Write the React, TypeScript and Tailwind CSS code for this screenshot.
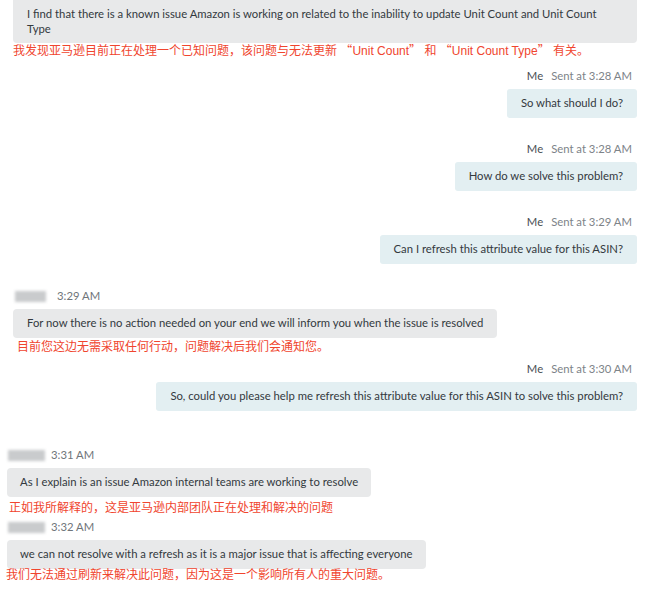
const font = { fontFamily: 'Lato, "Noto Sans CJK SC", sans-serif' };
const redFont = { fontFamily: '"Liberation Sans", "Noto Sans CJK SC", sans-serif' };
const quote = { fontFamily: '"Noto Sans CJK SC", sans-serif' };

type MineProps = { time: string; text: string; className?: string };

const Mine: React.FC<MineProps> = ({ time, text, className }) => (
  <div className={`flex flex-col items-end pr-[23px] ${className ?? ''}`}>
    <div className="flex items-center gap-[8px] pr-[5px] text-[11.3px] leading-[14px]">
      <span className="text-[#4a4f54]">Me</span>
      <span className="text-[#7d8388]">Sent at {time}</span>
    </div>
    <div className="mt-[6px] rounded-[3px] bg-[#e3eff2] px-[14px] h-[29px] flex items-center text-[11.3px] text-[#33393e]">
      {text}
    </div>
  </div>
);

type TheirsProps = {
  time: string;
  text: string;
  zh: string;
  wide?: boolean;
  zhClass: string;
  className?: string;
};

const Theirs: React.FC<TheirsProps> = ({ time, text, zh, wide, zhClass, className }) => (
  <div className={`flex flex-col items-start ${className ?? ''}`}>
    <div className={`flex items-center h-[14px] ${wide ? 'pl-[15px]' : 'pl-[8px]'}`}>
      <div
        className={`h-[11px] bg-[#c9cbcd] blur-[1.5px] ${wide ? 'w-[31px] mr-[11px]' : 'w-[37px] mr-[6px]'}`}
      />
      <span className="text-[11.3px] text-[#6f757a]">{time}</span>
    </div>
    <div
      className={`mt-[6px] rounded-[4px] bg-[#e8e9ea] h-[29px] flex items-center text-[11.3px] text-[#33393e] ${wide ? 'ml-[13px] px-[14px]' : 'ml-[7px] px-[13px]'}`}
    >
      {text}
    </div>
    <div className={`text-[12px] leading-[14px] text-[#f0452e] ${zhClass}`} style={redFont}>
      {zh}
    </div>
  </div>
);

export default function App() {
  return (
    <div className="w-[660px] h-[590px] overflow-hidden bg-white" style={font}>
      <div className="ml-[13px] mr-[23px] -mt-[4px] rounded-[4px] bg-[#e8e9ea] pl-[14px] pr-[20px] pt-[10px] pb-[7px] text-[11.3px] leading-[15px] text-[#33393e]">
        I find that there is a known issue Amazon is working on related to the
        inability to update Unit Count and Unit Count Type
      </div>
      <div className="ml-[13px] text-[12px] leading-[14px] text-[#f0452e]" style={redFont}>
        我发现亚马逊目前正在处理一个已知问题，该问题与无法更新{' '}
        <span style={quote}>“</span>Unit Count<span style={quote}>”</span> 和{' '}
        <span style={quote}>“</span>Unit Count Type<span style={quote}>”</span> 有关。
      </div>

      <Mine className="mt-[11px]" time="3:28 AM" text="So what should I do?" />
      <Mine className="mt-[24px]" time="3:28 AM" text="How do we solve this problem?" />
      <Mine
        className="mt-[24px]"
        time="3:29 AM"
        text="Can I refresh this attribute value for this ASIN?"
      />

      <Theirs
        className="mt-[25px]"
        wide
        time="3:29 AM"
        text="For now there is no action needed on your end we will inform you when the issue is resolved"
        zh="目前您这边无需采取任何行动，问题解决后我们会通知您。"
        zhClass="ml-[17px] mt-[2px]"
      />

      <Mine
        className="mt-[8px]"
        time="3:30 AM"
        text="So, could you please help me refresh this attribute value for this ASIN to solve this problem?"
      />

      <Theirs
        className="mt-[37px]"
        time="3:31 AM"
        text="As I explain is an issue Amazon internal teams are working to resolve"
        zh="正如我所解释的，这是亚马逊内部团队正在处理和解决的问题"
        zhClass="ml-[9px] mt-[4px]"
      />
      <Theirs
        className="mt-[5px]"
        time="3:32 AM"
        text="we can not resolve with a refresh as it is a major issue that is affecting everyone"
        zh="我们无法通过刷新来解决此问题，因为这是一个影响所有人的重大问题。"
        zhClass="ml-[6px] -mt-[1px]"
      />
    </div>
  );
}
